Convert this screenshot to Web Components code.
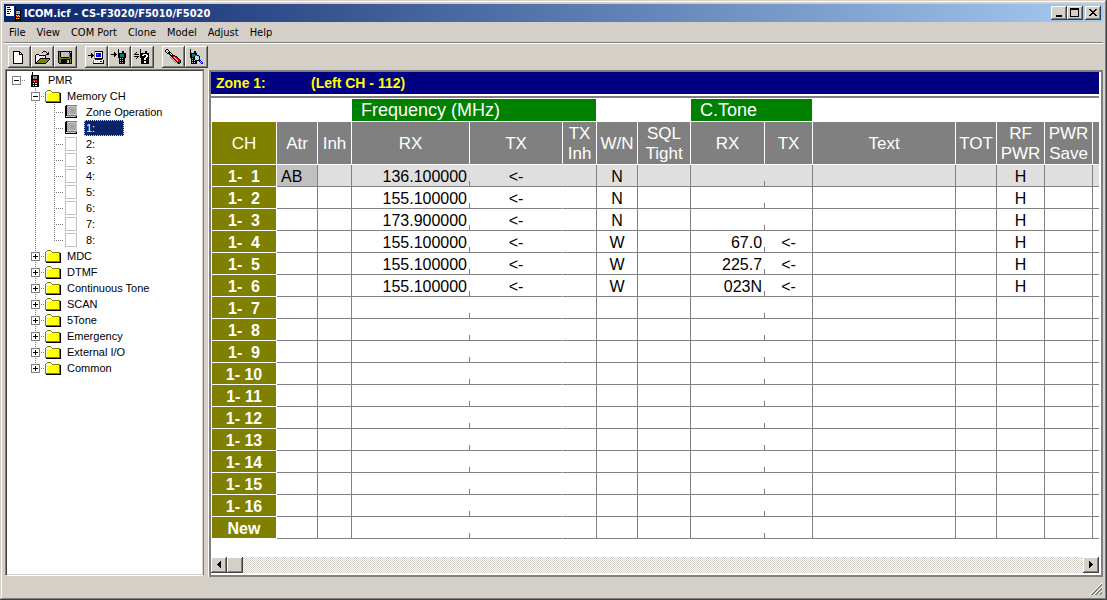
<!DOCTYPE html>
<html lang="en">
<head>
<meta charset="utf-8">
<title>ICOM.icf - CS-F3020/F5010/F5020</title>
<style>
html, body { height: 100%; }
body {
  margin: 0; overflow: hidden;
  font: 11px/16px "Liberation Sans", Arial, sans-serif; color: #000; background: #d4d0c8;
  --face: #d4d0c8; --shade: #808080; --dark: #404040; --navy: #0a246a;
  --raised: inset -1px -1px #404040, inset 1px 1px #fff, inset -2px -2px #808080;
  --ui: "DejaVu Sans Condensed", "DejaVu Sans", sans-serif;
}
</style>
</head>
<body>
<app-window>
  <title-bar slot="title">ICOM.icf - CS-F3020/F5010/F5020</title-bar>
  <menu-bar slot="menu"></menu-bar>
  <tool-bar slot="tools"></tool-bar>
  <nav-tree></nav-tree>
  <channel-sheet>
    <span slot="zone">Zone 1:</span>
    <span slot="left">(Left CH - 112)</span>
  </channel-sheet>
  <status-bar slot="status"></status-bar>
</app-window>

<script>
const COLORS = { k: '#000', w: '#fff', y: '#ff0', o: '#808000', g: '#808080', s: '#c0c0c0', r: '#f00',
  d: '#800000', b: '#00f', c: '#0ff', t: '#008080', n: '#000080', l: '#ffffb0', m: '#a0a0a0' };

/* Pixel icons: one string per row, one letter per pixel. */
const ICONS = {
  app: [
    'wwwwwwww........', 'wkkkwwww.k......', 'wwwwwwww.k......', 'wkkkkwww.k......', 'wwwwwwww.kkkkkk.',
    'wkkwkwww.kssssk.', 'wwwwwwww.kggggk.', 'wkkkwwww.kssssk.', 'wwwwwwww.kkkkkk.', 'wwwwwwww.kyryrk.',
    '.........kryryk.', '.........kkkkkk.', '.........kyryrk.', '.........kkkkkk.', '.........kkkkkk.'],
  file: [
    '................', '..kkkkkkk.......', '..kwwwwwkk......', '..kwwwwwkwk.....', '..kwwwwwkkkk....',
    '..kwwwwwwwwk....', '..kwwwwwwwwk....', '..kwwwwwwwwk....', '..kwwwwwwwwk....', '..kwwwwwwwwk....',
    '..kwwwwwwwwk....', '..kwwwwwwwwk....', '..kwwwwwwwwk....', '..kkkkkkkkkk....'],
  open: [
    '................', '.........kkk....', '........k...k.k.', '.............kk.', '..kkk.......kkk.',
    '.kywykkkkkkk....', '.kwywywywywk....', '.kywywywywyk....', '.kwywykkkkkkkkkk', '.kywykoooooooook',
    '.kwykoooooooook.', '.kykoooooooook..', '.kkoooooooook...', '.kkkkkkkkkkk....'],
  save: [
    '................', '.kkkkkkkkkkkkkk.', '.kokssssssssksk.', '.kokssssssssokk.', '.kokssssssssokk.',
    '.kokssssssssokk.', '.kokssssssssokk.', '.kookkkkkkkkook.', '.koooooooooookk.', '.kookkkkkkkkkok.',
    '.kookkkkkksskok.', '.kookkkkkksskok.', '.kookkkkkksskok.', '..kkkkkkkkkkkkk.'],
  toPc: [
    '................', '......gkkkkkkkk.', '......gwwwwwwwk.', '...k..gwbbbbbwk.', '...kk.gwbcbbbwk.',
    'kkkkkkgwbbbbbwk.', '...kk.gwbbbbbwk.', '...k..gwwwwwwwk.', '......gkkkkkkkk.', '.......nnnnnnn..',
    '.....gwwwwwwwwwk', '.....gwswswwnnwk', '.....gwwwwwwwwwk', '.....kkkkkkkkkkk'],
  toRadio: [
    '.......k........', '.......k........', '.......k...kk...', '...k...k...kk...', '...kk..kkkkkkkk.',
    'kkkkkk.kkttttkk.', '...kk..kkttttkk.', '...k...kkttttkk.', '.......kkkkkkkk.', '........kskskk..',
    '........kkkkkk..', '........kskskk..', '........kkkkkk..', '........kskskk..', '........kkkkkk..'],
  radioInfo: [
    '......k.........', '......k.........', '......k....kk...', '..k...k....kk...', '.k....kkkkkkkkk.',
    'kkkkk.kkkwwwwkk.', '......kkwwkkwwk.', 'kkkkk.kkkkkkwwk.', '...k..kkkkkwwkk.', '..k....kkkwwkkk.',
    '.......kkkwwkkk.', '.......kkkkkkkk.', '.......kkkwwkkk.', '.......kkkwwkkk.', '.......kkkkkkkk.'],
  tool: [
    '.kk.............', 'k..k............', 'k...k...........', '.k.kkk..........', '..kkkwk.........',
    '....kkwk........', '.....kkkkk......', '......kkrrkk....', '.....g.krwrrk...', '......g.krwrrk..',
    '.......g.krwrrk.', '........g.krwrrk', '.........g.krrrk', '..........g.kkrk', '............gkk.'],
  find: [
    '..k.............', '..k.............', '..k...kk........', '..k...kk........', '..kkkkkkk.......',
    '..kktttkk.......', '..kktttttkk.....', '..kkttkcwcck....', '..kkkkkwcwck....', '...kskkcwcwk....',
    '...kkkkwcwck....', '...ksk.kkkkbb...', '...kkkkkk..bcb..', '...kskskk...bcb.', '...kkkkkk....bb.'],
  radio: [
    '......k.........', '......k.........', '......k.........', '.....kkkkkkkk...', '.....kkggggkk...',
    '.....kksggskk...', '.....kkggggkk...', '.....kkkkkkkk...', '.....kkrrrrkk...', '.....kkryrrkk...',
    '.....kkkkkkkk...', '.....kkwkwwkk...', '.....kkkkkkkk...', '.....kkwkwwkk...', '.....kkkkkkkk...'],
  folder: [
    '................', '................', '..oooo..........', '.owwwwo.........', 'owllllwoooooooo.', 'owlllllllllllwok',
    'olyyyyyyyyyyyyok', 'olylylylylylyyok', 'olyyyyyyyyyyyyok', 'olyylylylylylyok', 'olyyyyyyyyyyyyok',
    'olylylylylylyyok', 'olyyyyyyyyyyyyok', 'oooooooooooooook', '.kkkkkkkkkkkkkkk'],
  book: [
    '................', '..kgggggggggg...', '.kkssssssssss...', '.kksmsmsmsmss...', '.kkmsmsmsmsms...',
    '.kksmsmmmmsms...', '.kkmsmsmmmmms...', '.kksmsmmmmsms...', '.kkmsmsmmmmms...', '.kksmsmsmsmss...',
    '.kkssssssssss...', '.kkgggggggggg...', '.kwsssssssssk...', '.kkkkkkkkkkkk...'],
  page: [
    '................', '.ssssssssssss...', '.swwwwwwwwwws...', '.swwwwwwwwwws...', '.swwwwwwwwwws...',
    '.swwwwwwwwwws...', '.swwwwwwwwwws...', '.swwwwwwwwwws...', '.swwwwwwwwwws...', '.swwwwwwwwwws...',
    '.swwwwwwwwwws...', '.swwwwwwwwwws...', '.swwwwwwwwwws...', '.swwwwwwwwwws...', '.ssssssssssss...'],
  min: ['........', '........', '........', '........', '........', '........', '.kkkkkk.', '.kkkkkk.'],
  max: ['kkkkkkkkk', 'kkkkkkkkk', 'k.......k', 'k.......k', 'k.......k', 'k.......k', 'k.......k', 'k.......k', 'kkkkkkkkk'],
  close: ['kk....kk', '.kk..kk.', '..kkkk..', '...kk...', '..kkkk..', '.kk..kk.', 'kk....kk'],
  left: ['...k', '..kk', '.kkk', 'kkkk', '.kkk', '..kk', '...k'],
  right: ['k...', 'kk..', 'kkk.', 'kkkk', 'kkk.', 'kk..', 'k...'],
  grip: [
    '...........w', '..........wg', '.........wgg', '........wgg.', '.......wgg.w', '......wgg.wg',
    '.....wgg.wgg', '....wgg.wgg.', '...wgg.wgg.w', '..wgg.wgg.wg', '.wgg.wgg.wgg', 'wgg.wgg.wgg.']
};

/* Registers an element from its styles and its markup; the markup may be a function of the element. */
function define(name, css, html) {
  const tpl = document.createElement('template');
  tpl.innerHTML = `<style>*{box-sizing:border-box}${css}</style>${typeof html === 'function' ? '' : html}`;
  customElements.define(name, class extends HTMLElement {
    constructor() {
      super();
      this.attachShadow({ mode: 'open' }).append(tpl.content.cloneNode(true));
    }
    connectedCallback() {
      if (this.ready) return;
      this.ready = true;
      if (typeof html === 'function') this.shadowRoot.innerHTML += html(this);
    }
  });
}

define('pixel-icon', ':host{display:block;flex:none} svg{display:block}', el => {
  const rows = ICONS[el.getAttribute('name')];
  const width = Math.max(...rows.map(r => r.length));
  let rects = '';
  rows.forEach((row, y) => {
    for (const run of row.matchAll(/([a-z])\1*/g))
      rects += `<rect x="${run.index}" y="${y}" width="${run[0].length}" height="1" fill="${COLORS[run[1]]}"/>`;
  });
  return `<svg width="${width}" height="${rows.length}" shape-rendering="crispEdges" aria-hidden="true">${rects}</svg>`;
});

define('app-window', `
  :host { display: flex; flex-direction: column; box-sizing: border-box; height: 100%; padding: 4px;
    background: var(--face);
    box-shadow: inset -1px -1px var(--dark), inset 1px 1px var(--face), inset -2px -2px var(--shade), inset 2px 2px #fff; }
  main { flex: 1; min-height: 0; display: grid; grid-template-columns: 199px minmax(0, 1fr); gap: 5px; padding-left: 1px; }
`, `<slot name="title"></slot><slot name="menu"></slot><slot name="tools"></slot><main><slot></slot></main><slot name="status"></slot>`);

define('title-bar', `
  :host { display: flex; align-items: center; height: 18px; padding: 0 2px; color: #fff;
    background: linear-gradient(90deg, #0a246a, #a6caf0); }
  h1 { flex: 1; margin: 0 0 0 2px; padding-top: 1px; font: bold 11px/17px var(--ui); white-space: nowrap; }
  button { display: grid; place-items: center; width: 16px; height: 14px; padding: 0 1px 1px 0; border: 0;
    background: var(--face); box-shadow: var(--raised); }
  .close { margin-left: 2px; }
`, `<pixel-icon name="app"></pixel-icon><h1><slot></slot></h1>
  <button aria-label="Minimize"><pixel-icon name="min"></pixel-icon></button>
  <button aria-label="Maximize"><pixel-icon name="max"></pixel-icon></button>
  <button class="close" aria-label="Close"><pixel-icon name="close"></pixel-icon></button>`);

define('menu-bar', `
  :host { display: block; border-bottom: 1px solid var(--shade); box-shadow: 0 1px #fff; }
  nav { display: flex; height: 20px; }
  button { padding: 2px 6px 0 5px; border: 0; background: none; font: 11px/18px var(--ui); color: #000; }
`, () => `<nav>${['File', 'View', 'COM Port', 'Clone', 'Model', 'Adjust', 'Help'].map(t => `<button>${t}</button>`).join('')}</nav>`);

define('tool-bar', `
  :host { display: flex; gap: 8px; height: 26px; padding: 3px 4px 0; box-sizing: border-box; }
  div { display: flex; }
  button { display: grid; place-items: center; width: 23px; height: 22px; padding: 0 1px 1px 0; border: 0;
    background: var(--face); box-shadow: var(--raised); }
`, () => [
    [['file', 'New'], ['open', 'Open'], ['save', 'Save']],
    [['toPc', 'Read from radio'], ['toRadio', 'Write to radio'], ['radioInfo', 'Radio information']],
    [['tool', 'Adjust'], ['find', 'Find radio']]
  ].map(g => `<div>${g.map(([i, t]) => `<button aria-label="${t}"><pixel-icon name="${i}"></pixel-icon></button>`).join('')}</div>`).join(''));

/* One 19px indent cell of the tree: dotted branches and, on a parent, the expander box. */
function branch(kind) {
  const [shape, box] = kind.split(' ');
  const d = { none: '', start: 'M9 8.5H19', line: 'M9.5 0V16', tee: 'M9.5 0V16M9 8.5H19', end: 'M9.5 0V8M9 8.5H19' }[shape];
  return `<svg width="19" height="16" shape-rendering="crispEdges" fill="none" aria-hidden="true">
    <path d="${d}" stroke="#808080" stroke-dasharray="1 1"/>
    ${box ? `<rect x="5.5" y="4.5" width="8" height="8" fill="#fff" stroke="#808080"/>
      <path d="M7 8.5H12${box === 'plus' ? 'M9.5 6V11' : ''}" stroke="#000"/>` : ''}</svg>`;
}
define('tree-row', `
  :host { display: flex; height: 16px; }
  svg { display: block; flex: none; }
  .label { margin-left: 4px; padding: 0 2px; white-space: nowrap; }
  :host([selected]) .label { min-width: 40px; padding: 0 1px; border: 1px dotted #f5db95; background: var(--navy); color: #fff; line-height: 14px; }
`, el => `${el.getAttribute('branches').split(',').map(branch).join('')}<pixel-icon name="${el.getAttribute('icon')}"></pixel-icon><span class="label"><slot></slot></span>`);

define('nav-tree', `
  :host { display: block; overflow: hidden; background: #fff; border: 1px solid; border-color: var(--shade) var(--shade) #fff var(--shade);
    box-shadow: inset 1px 1px var(--dark), inset -1px -1px var(--face); padding: 2px 1px; margin-bottom: 1px; }
`, () => {
  const row = (branches, icon, text, more = '') =>
    `<tree-row role="treeitem" branches="${branches}" icon="${icon}" ${more}>${text}</tree-row>`;
  const zones = [1, 2, 3, 4, 5, 6, 7, 8].map(n =>
    row(`none,line,${n === 8 ? 'end' : 'tee'}`, n === 1 ? 'book' : 'page', n + ':', n === 1 ? 'selected aria-selected="true"' : ''));
  const folders = ['MDC', 'DTMF', 'Continuous Tone', 'SCAN', '5Tone', 'Emergency', 'External I/O', 'Common'];
  return `<div role="tree" aria-label="Settings">${row('start minus', 'radio', 'PMR')}${row('none,tee minus', 'folder', 'Memory CH')}
    ${row('none,line,tee', 'book', 'Zone Operation')}${zones.join('')}
    ${folders.map((f, i) => row(`none,${i === folders.length - 1 ? 'end' : 'tee'} plus`, 'folder', f)).join('')}</div>`;
});

define('channel-sheet', `
  :host { display: flex; flex-direction: column; min-width: 0; margin-top: 1px; padding: 0 2px 2px 0; overflow: hidden;
    background: #fff; border: 2px solid var(--shade); box-shadow: -1px 0 #fff; box-sizing: border-box; }
  header { display: grid; grid-template-columns: 95px 1fr; height: 22px; padding-left: 5px; background: #000080;
    color: #ff0; font-weight: bold; font-size: 14px; line-height: 22px; white-space: nowrap; }
  .grid { flex: 1; min-height: 0; overflow: hidden; margin-top: 2px; padding: 1px 0 0 1px; border-top: 2px solid var(--shade); }
`, `<header><slot name="zone"></slot><slot name="left"></slot></header><div class="grid"><channel-table></channel-table></div><scroll-bar></scroll-bar>`);

define('channel-table', `
  :host { display: block; }
  table { width: 100%; table-layout: fixed; border-collapse: separate; border-spacing: 0; }
  th, td { padding: 0; overflow: hidden; white-space: pre; border: 0 solid #808080; border-width: 0 1px 1px 0; text-align: center; }
  th { border-color: #fff; color: #fff; font-weight: normal; font-size: 17px; }
  .groups > * { height: 23px; padding-top: 0; border-color: #fff; }
  .groups th { padding-left: 9px; background: #008000; font-size: 18px; line-height: 22px; text-align: left; }
  .heads th { height: 43px; padding-top: 2px; background: #808080; line-height: 20px; }
  .heads .ch, tbody th { background: #808000; }
  tbody th { font-weight: bold; font-size: 16px; }
  tbody th, tbody td { height: 22px; padding-top: 2px; line-height: 19px; }
  td { font-size: 16px; }
  tbody .atr { padding-left: 4px; text-align: left; }
  tbody .rx { padding-right: 2px; text-align: right; border-right-color: transparent;
    background: linear-gradient(#808080, #808080) right bottom / 1px 6px no-repeat border-box; }
  .tx { border-right-color: transparent; background-clip: border-box; }
  .current td { background-color: #dfdfdf; }
  .current .atr { background-color: #c0c0c0; }
  tr > :last-child { border-right: 0; }
`, () => {
  const widths = [65, 41, 34, 118, 93, 34, 41, 53, 74, 48, 143, 41, 48, 48];
  const heads = ['CH', 'Atr', 'Inh', 'RX', 'TX', 'TX\nInh', 'W/N', 'SQL\nTight', 'RX', 'TX', 'Text', 'TOT', 'RF\nPWR', 'PWR\nSave', ''];
  const data = [
    ['AB', '136.100000', 'N', ''], ['', '155.100000', 'N', ''], ['', '173.900000', 'N', ''],
    ['', '155.100000', 'W', '67.0'], ['', '155.100000', 'W', '225.7'], ['', '155.100000', 'W', '023N']
  ];
  const classes = ['atr', '', 'rx', 'tx', '', '', '', 'rx', '', '', '', '', '', ''];
  const rows = Array.from({ length: 17 }, (_, i) => {
    const d = data[i];
    const cells = Array(14).fill('');
    if (d) {
      cells[0] = d[0]; cells[2] = d[1]; cells[3] = '&lt;-'; cells[5] = d[2];
      cells[7] = d[3]; cells[8] = d[3] && '&lt;-'; cells[11] = 'H';
    }
    const name = i === 16 ? 'New' : (i < 9 ? '1-  ' : '1- ') + (i + 1);
    return `<tr${i ? '' : ' class="current"'}><th scope="row">${name}</th>${cells.map((c, j) => `<td class="${classes[j]}">${c}</td>`).join('')}</tr>`;
  });
  return `<table><colgroup>${widths.map(w => `<col style="width:${w}px">`).join('')}<col></colgroup>
    <thead><tr class="groups"><td colspan="3"></td><th colspan="3" scope="colgroup">Frequency (MHz)</th><td colspan="2"></td><th colspan="2" scope="colgroup">C.Tone</th><td colspan="5"></td></tr>
    <tr class="heads">${heads.map((h, i) => `<th scope="col"${i ? '' : ' class="ch"'}>${h}</th>`).join('')}</tr></thead>
    <tbody>${rows.join('')}</tbody></table>`;
});

define('scroll-bar', `
  :host { display: flex; height: 16px; background: conic-gradient(#fff 25%, #d4d0c8 0 50%, #fff 0 75%, #d4d0c8 0) 0 0 / 2px 2px; }
  button, .thumb { display: grid; place-items: center; width: 16px; height: 16px; padding: 0 1px 1px 0; border: 0;
    background: var(--face); box-shadow: var(--raised); }
  .next { margin-left: auto; }
`, `<button aria-label="Scroll left"><pixel-icon name="left"></pixel-icon></button><div class="thumb"></div>
  <button class="next" aria-label="Scroll right"><pixel-icon name="right"></pixel-icon></button>`);

define('status-bar', `
  :host { display: flex; justify-content: flex-end; align-items: flex-end; height: 19px; box-sizing: border-box; padding: 0 1px 1px 0; }
`, `<pixel-icon name="grip"></pixel-icon>`);
</script>
</body>
</html>
